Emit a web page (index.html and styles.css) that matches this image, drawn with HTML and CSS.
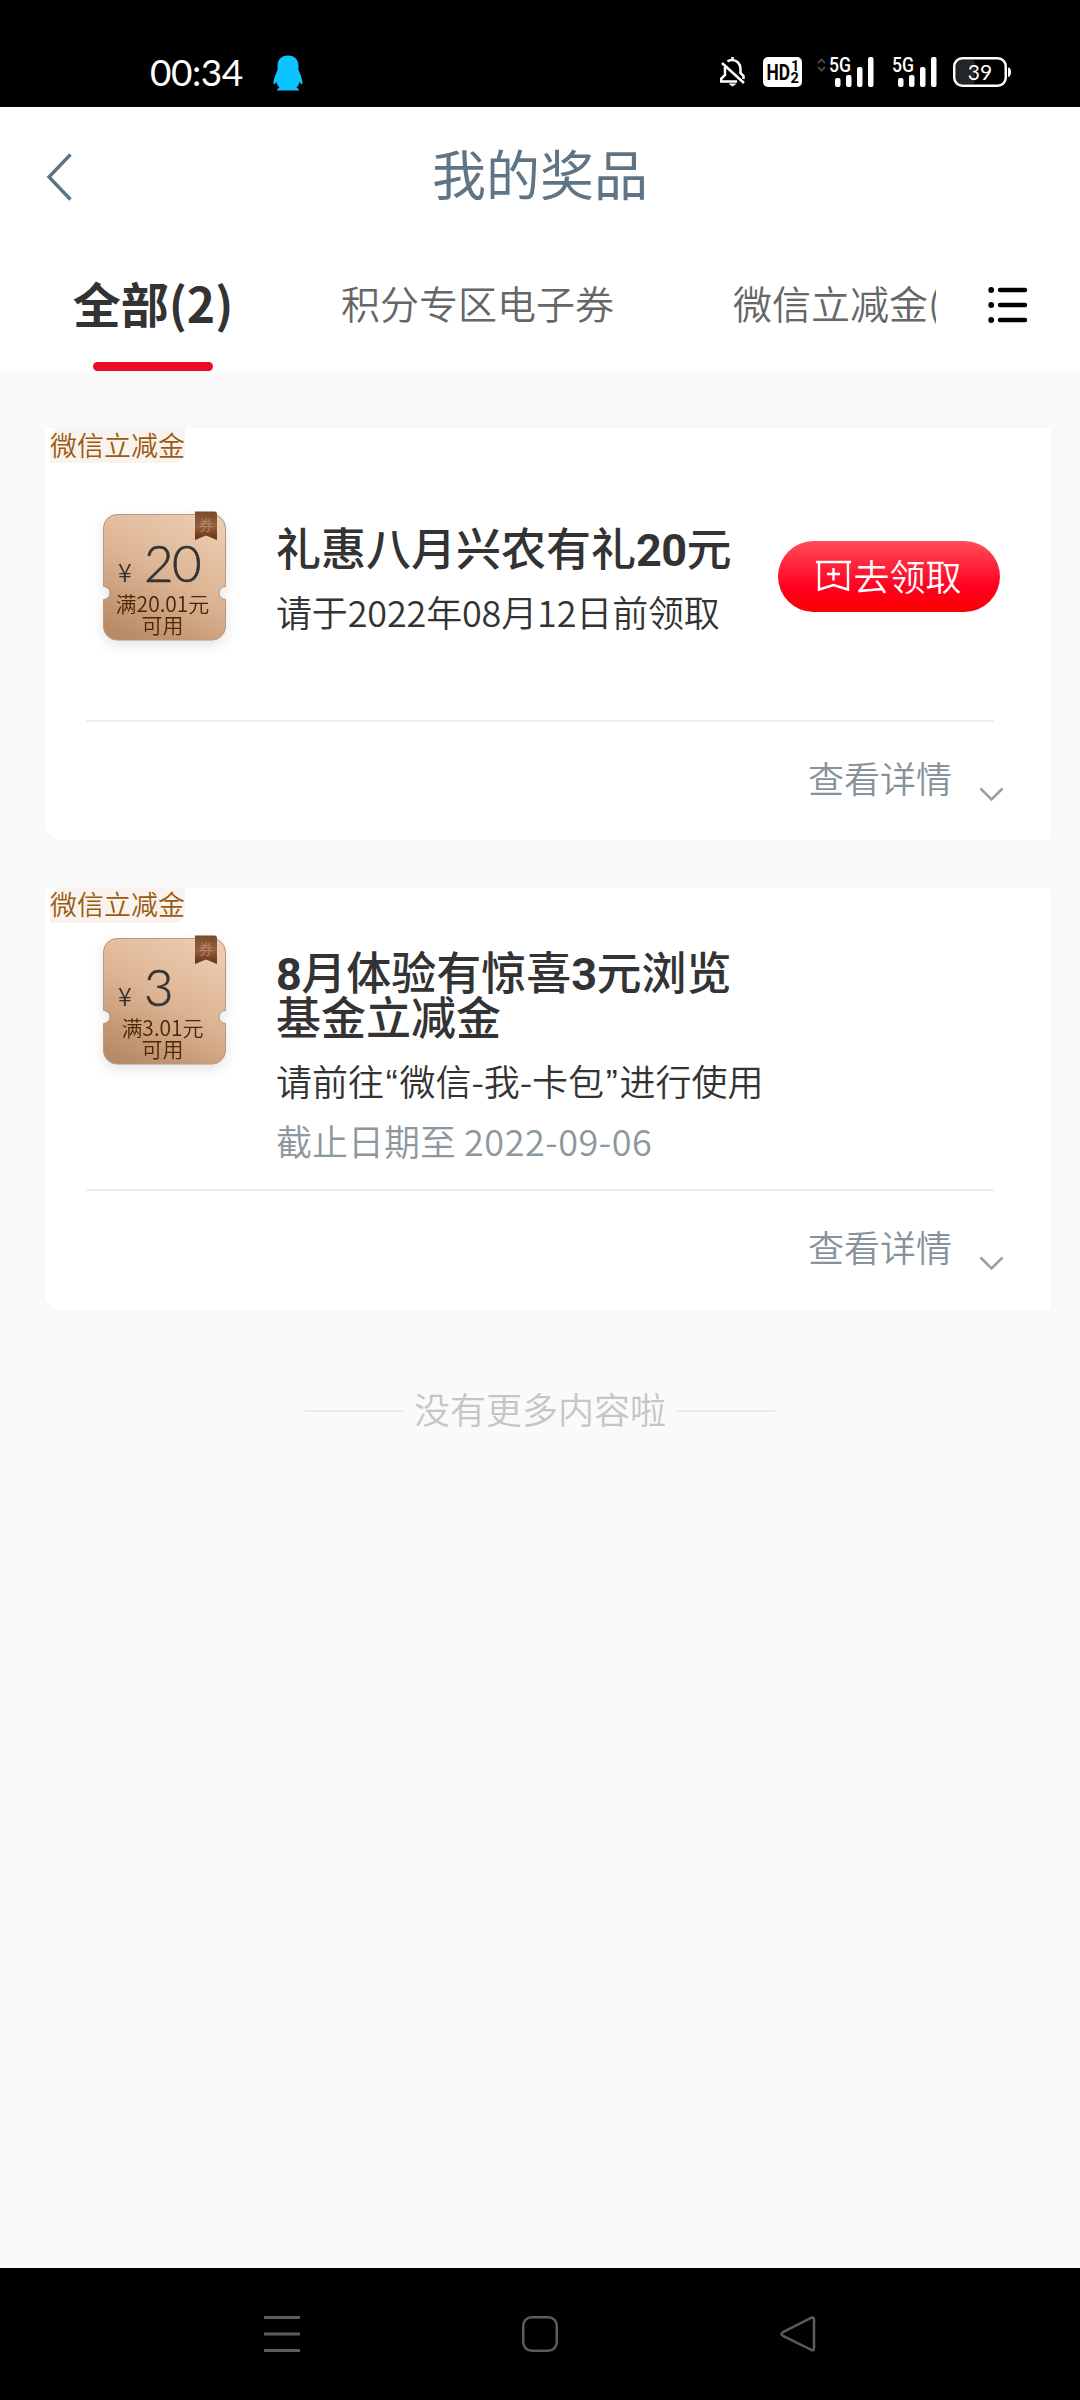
FILE: index.html
```html
<!DOCTYPE html>
<html lang="zh-CN">
<head>
<meta charset="utf-8">
<title>我的奖品</title>
<link rel="stylesheet" href="styles.css">
</head>
<body>
<svg width="0" height="0" class="defs" aria-hidden="true">
  <defs>
    <linearGradient id="copper" x1="0.75" y1="0" x2="0.25" y2="1">
      <stop offset="0" stop-color="#eccbb0"/>
      <stop offset="0.5" stop-color="#dcb493"/>
      <stop offset="1" stop-color="#b98a66"/>
    </linearGradient>
    <linearGradient id="ribbon" x1="0" y1="0" x2="0" y2="1">
      <stop offset="0" stop-color="#7b482a"/>
      <stop offset="0.5" stop-color="#93603f"/>
      <stop offset="1" stop-color="#683110"/>
    </linearGradient>
    <symbol id="ticket" viewBox="0 0 123 130">
      <path d="M14 3.5H109A13.500 13.500 0 0 1 122.500 17V75.500A6.500 6.500 0 0 0 122.500 88.500V115.500A13.500 13.500 0 0 1 109 129H14A13.500 13.500 0 0 1 .5 115.500V88.500A6.500 6.500 0 0 0 .5 75.500V17A13.500 13.500 0 0 1 14 3.500Z" fill="url(#copper)" stroke="#b9977e" stroke-width="1"/>
      <path d="M92 0.500H112Q114 .5 114 3V29L103 24.500L92 29Z" fill="url(#ribbon)"/>
    </symbol>
  </defs>
</svg>

<header class="status">
  <div class="status-left">
    <span class="clock">00:34</span>
    <svg class="penguin" width="30" height="36" viewBox="0 0 30 36"><path d="M15 0.500C22 .5 25.500 5 25.500 11V15C27 19 29.500 23 29.500 29C28.500 30 27.500 28 26.500 27C26 30 24.500 31.500 23.500 32.500C25 33.500 26 34 26 35.500H4C4 34 5 33.500 6.500 32.500C5.500 31.500 4 30 3.500 27C2.500 28 1.500 30 .5 29C.5 23 3 19 4.500 15V11C4.500 5 8 .5 15 .5Z" fill="#0cc3ff"/></svg>
  </div>
  <div class="status-right">
    <svg width="25" height="30" viewBox="0 0 25 30" fill="none" stroke="#fff" stroke-width="2.500">
      <path d="M7.500 4.500C10 2.500 15 2.500 18 5.500C20 7.500 20.500 10 20.500 12V16L23.500 19V22"/>
      <path d="M12.500 0V3"/><path d="M2 6L24 26"/><path d="M5 10V18L1.300 21.500V24.500H17"/>
      <path d="M9.500 27H15.500L12.500 29Z" fill="#fff" stroke-width="1"/>
    </svg>
    <svg class="hd" width="39" height="30" viewBox="0 0 39 30"><rect width="39" height="30" rx="5" fill="#fff"/>
      <text x="3.500" y="22.800" font-size="22" textLength="23.500" lengthAdjust="spacingAndGlyphs">HD</text>
      <text x="28" y="14" font-size="14.500">1</text><text x="27.500" y="25.500" font-size="14.500">2</text></svg>
    <svg class="signal first" width="58" height="30" viewBox="0 0 58 30">
      <g fill="none" stroke="#444" stroke-width="2"><path d="M2 6L5.500 2.500L9 6"/><path d="M2 10L5.500 13.500L9 10"/></g>
      <text x="13" y="14.800" font-size="19.500" textLength="22" lengthAdjust="spacingAndGlyphs">5G</text>
      <g fill="#fff"><rect x="19" y="21" width="5.500" height="9" rx="2"/><rect x="30" y="18" width="5.500" height="12" rx="2"/><rect x="41" y="10" width="5.500" height="20" rx="2"/><rect x="52" y="0" width="5.500" height="30" rx="2"/></g>
    </svg>
    <svg class="signal" width="45" height="30" viewBox="0 0 45 30">
      <text x="0" y="14.800" font-size="19.500" textLength="22" lengthAdjust="spacingAndGlyphs">5G</text>
      <g fill="#fff"><rect x="6" y="21" width="5.500" height="9" rx="2"/><rect x="17" y="18" width="5.500" height="12" rx="2"/><rect x="28" y="10" width="5.500" height="20" rx="2"/><rect x="39" y="0" width="5.500" height="30" rx="2"/></g>
    </svg>
    <svg class="battery" width="58" height="30" viewBox="0 0 58 30">
      <rect x="3" y="3" width="19" height="24" rx="4" fill="#252525"/>
      <rect x="1.250" y="1.250" width="51.500" height="27.500" rx="8" fill="none" stroke="#fff" stroke-width="2.500"/>
      <path d="M55 10.500Q58 10.500 58 15T55 20Z" fill="#fff"/>
      <text x="27" y="22.500" font-size="21" text-anchor="middle">39</text>
    </svg>
  </div>
</header>

<nav class="titlebar">
  <svg class="back" width="28" height="50" viewBox="0 0 28 50"><path d="M24.500 2.500L3 25L24.500 47.500" fill="none" stroke="#5d7485" stroke-width="3.400"/></svg>
  <h1>我的奖品</h1>
</nav>

<div class="tabs">
  <div class="tab-list">
    <div class="tab active">全部(2)</div>
    <div class="tab second">积分专区电子券</div>
    <div class="tab third">微信立减金(1)</div>
  </div>
  <svg class="list-icon" width="40" height="38" viewBox="0 0 40 38"><g stroke="#000" stroke-width="4.400" stroke-linecap="round"><path d="M12 4H37M12 19H37M12 34H37"/></g><g fill="#000"><circle cx="3.200" cy="4" r="2.900"/><circle cx="3.200" cy="19" r="2.900"/><circle cx="3.200" cy="34" r="2.900"/></g></svg>
</div>

<main>
  <section class="card first-card">
    <span class="tag">微信立减金</span>
    <div class="row">
      <div class="coupon">
        <svg class="ticket" width="123" height="130"><use href="#ticket"/></svg>
        <span class="seal">券</span>
        <div class="price"><span class="yen">¥</span><span class="amount">20</span></div>
        <div class="rule">满20.01元<br>可用</div>
      </div>
      <div class="info">
        <h2>礼惠八月兴农有礼<span class="num">20</span>元</h2>
        <p class="deadline">请于2022年08月12日前领取</p>
      </div>
      <button class="claim">
        <svg width="35" height="32" viewBox="0 0 35 32" fill="none" stroke="#fff" stroke-width="2.400"><path d="M0 2H35"/><path d="M3 2V29.500L17.500 25L32 29.500V2"/><path d="M11 14H24M17.500 8V20.500"/></svg>去领取
      </button>
    </div>
    <div class="details"><span>查看详情</span><svg width="25" height="15" viewBox="0 0 25 15"><path d="M1.500 1.500L12.500 12.500L23.500 1.500" fill="none" stroke="#999fa3" stroke-width="2.600"/></svg></div>
  </section>

  <section class="card second-card">
    <span class="tag">微信立减金</span>
    <div class="row">
      <div class="coupon">
        <svg class="ticket" width="123" height="130"><use href="#ticket"/></svg>
        <span class="seal">券</span>
        <div class="price"><span class="yen">¥</span><span class="amount">3</span></div>
        <div class="rule">满3.01元<br>可用</div>
      </div>
      <div class="info">
        <h2><span class="num">8</span>月体验有惊喜<span class="num">3</span>元浏览<br>基金立减金</h2>
        <p>请前往<span class="quote">“</span>微信-我-卡包<span class="quote">”</span>进行使用</p>
        <p class="date">截止日期至 <span class="day">2022-09-06</span></p>
      </div>
    </div>
    <div class="details"><span>查看详情</span><svg width="25" height="15" viewBox="0 0 25 15"><path d="M1.500 1.500L12.500 12.500L23.500 1.500" fill="none" stroke="#999fa3" stroke-width="2.600"/></svg></div>
  </section>

  <div class="end"><span>没有更多内容啦</span></div>
</main>

<footer class="navbar">
  <svg width="36" height="36" viewBox="0 0 36 36"><path d="M0 1.500H36M0 18H36M0 34.500H36" stroke="#5c5c5c" stroke-width="3"/></svg>
  <svg width="36" height="36" viewBox="0 0 36 36"><rect x="1.250" y="1.250" width="33.500" height="33.500" rx="8.500" fill="none" stroke="#5c5c5c" stroke-width="2.500"/></svg>
  <svg width="36" height="36" viewBox="0 0 36 36"><path d="M30.500 2.200Q34 .2 34 4V32Q34 35.800 30.500 33.500L3 19.800Q0 18 3 16.200Z" fill="none" stroke="#5c5c5c" stroke-width="2.500"/></svg>
</footer>
</body>
</html>
```
FILE: styles.css
```css
* { box-sizing: border-box; }
body {
  margin: 0;
  width: 1080px;
  height: 2400px;
  display: flex;
  flex-direction: column;
  background: #fafafa;
  color: #333;
  font-family: "Noto Sans CJK SC", "Noto Sans", sans-serif;
  font-weight: 350;
  overflow: hidden;
}
h1, h2, p { margin: 0; }
svg { display: block; flex: none; }
.defs { position: absolute; }

.status {
  height: 107px;
  padding: 55px 69px 0 150px;
  display: flex;
  justify-content: space-between;
  background: #000;
  color: #fff;
}
.status-left, .status-right { display: flex; align-items: flex-start; }
.clock {
  width: 123px;
  font: 400 37px/33px Lato, sans-serif;
  letter-spacing: -.5px;
  white-space: nowrap;
}
.status-right { padding-top: 2px; }
.status-right text { fill: #fff; font-family: Roboto, sans-serif; }
.hd { margin-left: 18px; }
.status-right .hd text { fill: #000; font-weight: 700; }
.signal text { font-weight: 500; }
.signal.first { margin-left: 14px; }
.signal { margin-left: 18px; }
.battery { margin-left: 16px; }
.status-right .battery text { font-family: Lato, sans-serif; font-weight: 400; }

.titlebar {
  height: 139px;
  padding: 0 46px;
  display: grid;
  grid-template-columns: 100px 1fr 100px;
  align-items: center;
  background: #fff;
}
.titlebar h1 {
  padding-bottom: 7px;
  text-align: center;
  font-size: 54px;
  font-weight: 400;
  line-height: 60px;
  color: #5f7484;
}

.tabs { height: 125px; display: flex; background: #fff; }
.tab-list { width: 936px; display: flex; overflow: hidden; white-space: nowrap; }
.tab { flex: none; font-size: 39px; line-height: 112px; color: #666; }
.tab.active {
  position: relative;
  width: 120px;
  margin-left: 93px;
  display: flex;
  justify-content: center;
  font-size: 48px;
  font-weight: 700;
  color: #333;
}
.tab.active::after {
  content: "";
  position: absolute;
  left: 0;
  bottom: 0;
  width: 120px;
  height: 9px;
  border-radius: 5px;
  background: #ec0b27;
}
.second { margin-left: 128px; }
.third { margin-left: 119px; }
.list-icon { margin: 40px 0 0 52px; }

main { flex: 1; padding: 57px 29px 0 45px; }
.card {
  height: 412px;
  display: grid;
  grid-template-columns: 100%;
  grid-template-rows: 35px 259px 1fr;
  background: #fff;
  border-radius: 0 0 0 16px;
  box-shadow: 0 0 13px rgba(0, 0, 0, .025);
}
.tag {
  width: 135px;
  margin-left: 5px;
  line-height: 33px;
  font-size: 27px;
  white-space: nowrap;
  color: #985b12;
  background: #faf2ec;
  border-radius: 12px 0 12px 0;
}
.row {
  margin: 0 57px 0 41px;
  padding-left: 17px;
  display: flex;
  border-bottom: 2px solid #ededed;
}
.coupon {
  position: relative;
  width: 123px;
  height: 130px;
  margin-top: 48px;
  flex: none;
  filter: drop-shadow(0 5px 6px rgba(0, 0, 0, .1));
}
.ticket { position: absolute; inset: 0; }
.seal {
  position: absolute;
  left: 96px;
  top: 5px;
  font-size: 14px;
  line-height: 16px;
  color: #b98c70;
}
.price {
  position: relative;
  height: 82px;
  padding: 27px 0 0 15px;
  display: flex;
  align-items: baseline;
  line-height: 50px;
}
.yen { width: 26px; font-size: 25px; }
.amount {
  font-family: Lato, sans-serif;
  font-size: 51px;
  font-weight: 300;
  letter-spacing: -1.5px;
  -webkit-text-stroke: .6px #333;
}
.rule {
  position: relative;
  margin-left: -4px;
  text-align: center;
  font-size: 21px;
  line-height: 21px;
  white-space: nowrap;
  color: #4b2607;
}
.info { width: 501px; padding: 61px 0 0 50px; flex: none; white-space: nowrap; }
h2 { font-size: 45px; font-weight: 500; line-height: 45px; }
.num { font-family: Roboto, sans-serif; font-weight: 700; line-height: 0; letter-spacing: -.6px; }
.info p { margin-top: 20px; font-size: 36px; line-height: 44px; }
.info .deadline { letter-spacing: -.15px; }
.quote { padding: 0 1.700px; font-family: "Liberation Sans", sans-serif; line-height: 0; }
.claim {
  width: 222px;
  height: 71px;
  margin: 78px -10px 0 51px;
  padding: 0 0 4px;
  flex: none;
  display: flex;
  align-items: center;
  justify-content: center;
  gap: 2px;
  border: 0;
  border-radius: 36px;
  background: linear-gradient(#ff4d59, #ff0020 65%, #fc0000);
  color: #fff;
  font: 350 36px/50px "Noto Sans CJK SC", sans-serif;
}
.claim svg { margin-top: 2px; }
.details {
  padding: 30px 47px 0 0;
  display: flex;
  justify-content: flex-end;
  gap: 27px;
  font-size: 36px;
  line-height: 50px;
  color: #87939a;
}
.details svg { margin-top: 35px; }

.second-card { height: 422px; margin-top: 48px; grid-template-rows: 35px 268px 1fr; }
.second-card .tag { line-height: 31px; }
.second-card .coupon { margin-top: 12px; }
.second-card .info { padding-top: 25px; }
.second-card .info p { margin-top: 20px; }
.second-card .info .date { margin-top: 16px; color: #8c989e; }
.day { letter-spacing: .55px; }

.end {
  margin: 73px 0 0 -16px;
  display: flex;
  justify-content: center;
  align-items: center;
  gap: 11px;
  font-size: 36px;
  line-height: 50px;
  color: #c6c6c6;
}
.end::before, .end::after {
  content: "";
  width: 98px;
  height: 2px;
  margin-top: 6px;
  background: #ececec;
}

.navbar {
  height: 132px;
  padding: 48px 264px 0;
  display: flex;
  justify-content: space-between;
  background: #000;
}
```
